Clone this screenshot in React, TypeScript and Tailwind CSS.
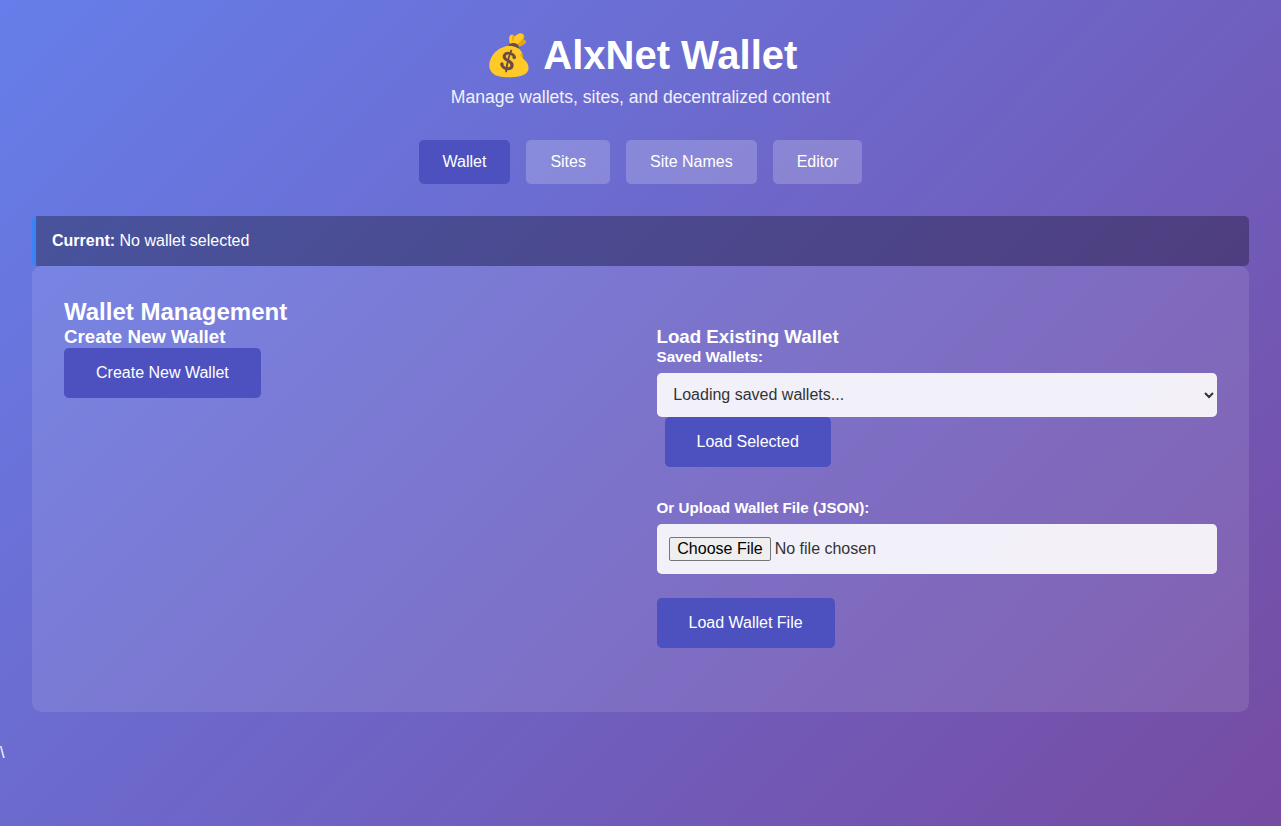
import React from "react";

const tabs = ["Wallet", "Sites", "Site Names", "Editor"];

function ActionButton({ children, className = "" }: { children: React.ReactNode; className?: string }) {
  return (
    <button className={`h-[50px] rounded-[4.8px] bg-[#4c51bf] px-8 text-base text-white ${className}`}>
      {children}
    </button>
  );
}

export default function App() {
  return (
    <div className="min-h-screen bg-[linear-gradient(135deg,#667eea_0%,#764ba2_100%)] font-['Liberation_Sans',Arial,sans-serif] text-base leading-[18px] text-white">
      <div className="p-8">
        <header className="mb-8 text-center">
          <h1 className="mb-2 h-[46px] text-[40px] leading-[46px] font-bold">💰 AlxNet Wallet</h1>
          <p className="h-[22px] text-[17.6px] leading-[22px] opacity-90">Manage wallets, sites, and decentralized content</p>
        </header>
        <nav className="mb-8 flex justify-center gap-4">
          {tabs.map((tab, i) => (
            <button
              key={tab}
              className={`h-11 rounded-[4.8px] px-6 text-base text-white ${i === 0 ? "bg-[#4c51bf]" : "bg-[rgba(255,255,255,0.2)]"}`}
            >
              {tab}
            </button>
          ))}
        </nav>
        <div className="h-[50px] rounded-[4.8px] border-l-4 border-[#3b82f6] bg-[rgba(0,0,0,0.3)] p-4">
          <strong>Current:</strong> No wallet selected
        </div>
        <main className="h-[446px] rounded-[9.6px] bg-[rgba(255,255,255,0.1)] p-8">
          <h2 className="text-2xl leading-7 font-bold">Wallet Management</h2>
          <div className="grid grid-cols-2 gap-8">
            <section>
              <h3 className="text-[18.72px] leading-[22px] font-bold">Create New Wallet</h3>
              <ActionButton>Create New Wallet</ActionButton>
            </section>
            <section>
              <h3 className="text-[18.72px] leading-[22px] font-bold">Load Existing Wallet</h3>
              <div className="mb-8">
                <label className="mb-2 block text-[15.2px] leading-[17px] font-bold">Saved Wallets:</label>
                <select className="block h-11 w-full rounded-[4.8px] bg-[rgba(255,255,255,0.9)] px-[12.8px] pb-[2px] text-base leading-normal text-[#333]">
                  <option>Loading saved wallets...</option>
                </select>
                <ActionButton className="ml-2">Load Selected</ActionButton>
              </div>
              <label className="mb-2 block text-[15.2px] leading-[17px] font-bold">Or Upload Wallet File (JSON):</label>
              <input
                type="file"
                className="mb-6 block h-[50px] w-full rounded-[4.8px] bg-[rgba(255,255,255,0.9)] px-[12.8px] py-[12.8px] text-base leading-[normal] text-[#333] file:h-6 file:rounded-[2px] file:border file:border-solid file:border-[#767676] file:bg-[#efefef] file:px-[7px] file:py-0 file:text-black"
              />
              <ActionButton>Load Wallet File</ActionButton>
            </section>
          </div>
        </main>
      </div>
      <div className="leading-[18px]">\</div>
    </div>
  );
}
